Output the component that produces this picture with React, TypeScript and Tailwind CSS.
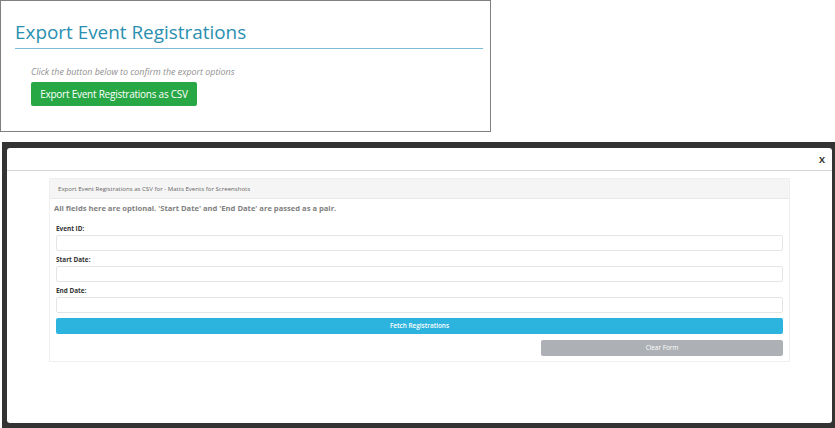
export default function App() {
  const fields = ["Event ID:", "Start Date:", "End Date:"];

  return (
    <div className="flex h-[428px] w-[835px] flex-col overflow-hidden bg-white font-['Open_Sans',sans-serif]">
      <div className="h-[132px] w-[491px] border border-[#808080] pl-[14px] pr-[7px] pt-[16px]">
        <h1 className="h-[32px] border-b border-[#7dbcd8] text-[18.9px] leading-[30px] text-[#2a8fb0]">
          Export Event Registrations
        </h1>
        <div className="pl-[16px] pt-[16px]">
          <p className="text-[8.9px] italic leading-[13px] text-[#8f8f8f]">Click the button below to confirm the export options</p>
          <button className="mt-[4px] block h-[24px] w-[166px] whitespace-nowrap rounded-[2px] bg-[#28a745] text-center text-[10px] tracking-[-0.24px] text-white">
            Export Event Registrations as CSV
          </button>
        </div>
      </div>

      <div className="ml-[2px] mt-[10px] flex h-[286px] w-[833px] flex-col bg-[#333333] pb-[5px] pl-[5px] pr-[3px] pt-[6px]">
        <div className="flex h-full flex-col rounded-[3px] bg-white">
          <div className="flex h-[23px] shrink-0 items-center justify-end border-b border-[#d8d8d8] pr-[7px]">
            <span className="text-[9px] font-bold leading-none text-[#333333]">X</span>
          </div>
          <div className="flex-1 px-[42px] pt-[7px]">
            <div className="h-[184px] border border-[#efefef]">
              <div className="flex h-[20px] items-center border-b border-[#e8e8e8] bg-[#f5f5f5] pl-[8px] pt-[1px] text-[6.1px] text-[#666666]">
                Export Event Registrations as CSV for - Matts Events for Screenshots
              </div>
              <div className="px-[6px]">
                <p className="-ml-[2px] pt-[2px] text-[7.6px] font-bold leading-[14px] text-[#7f7f7f]">
                  All fields here are optional. 'Start Date' and 'End Date' are passed as a pair.
                </p>
                <div className="mt-[8px] flex flex-col gap-[3px]">
                  {fields.map((f) => (
                    <div key={f}>
                      <label className="block text-[6.4px] font-bold leading-[12px] text-[#333333]">{f}</label>
                      <input className="block h-[16px] w-full rounded-[2px] border border-[#e3e6e8] bg-white" />
                    </div>
                  ))}
                </div>
                <button className="mt-[5px] block h-[16px] w-full rounded-[2px] bg-[#2db4de] text-center text-[6.4px] font-semibold text-white">
                  Fetch Registrations
                </button>
                <div className="mt-[6px] flex justify-end">
                  <button className="h-[16px] w-[242px] rounded-[2px] bg-[#adb1b5] text-center text-[6.4px] text-white">
                    Clear Form
                  </button>
                </div>
              </div>
            </div>
          </div>
        </div>
      </div>
    </div>
  );
}
